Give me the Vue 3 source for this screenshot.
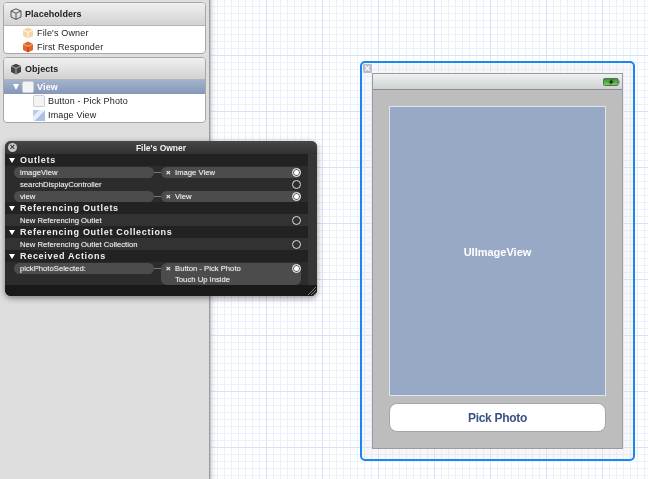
<script setup>
const sections = [
  { title: 'Outlets', rows: [
    { name: 'imageView', target: 'Image View', on: true, pill: true },
    { name: 'searchDisplayController' },
    { name: 'view', target: 'View', on: true, pill: true },
  ]},
  { title: 'Referencing Outlets', rows: [{ name: 'New Referencing Outlet', band: true }] },
  { title: 'Referencing Outlet Collections', rows: [{ name: 'New Referencing Outlet Collection', band: true }] },
  { title: 'Received Actions', rows: [
    { name: 'pickPhotoSelected:', target: 'Button - Pick Photo', sub: 'Touch Up Inside', on: true, pill: true },
  ]},
]
</script>

<template>
  <div class="app">
    <aside class="side">
      <section class="panel first">
        <header class="panel-head">
          <svg class="cube" viewBox="0 0 12 12"><path d="M6 .8 11 3v6l-5 2.4L1 9V3zM1 3l5 2.3L11 3M6 5.3v6" fill="none" stroke="#555" stroke-width="1"/></svg>
          <span>Placeholders</span>
        </header>
        <div class="row l1">
          <svg class="ico" viewBox="0 0 12 12"><path d="M6 .5 11 3v6l-5 2.5L1 9V3z" fill="#f8d3a6"/><path d="M1 3l5 2.5L11 3M6 5.5v6" fill="none" stroke="#fff" stroke-width=".9"/></svg>
          <span>File's Owner</span>
        </div>
        <div class="row l1">
          <svg class="ico" viewBox="0 0 12 12"><path d="M6 .5 11 3v6l-5 2.5L1 9V3z" fill="#e0672a"/><path d="M1 3l5 2.5L11 3" fill="none" stroke="#f9b98a" stroke-width=".9"/><path d="M6 6v5" stroke="#a83d10"/></svg>
          <span>First Responder</span>
        </div>
      </section>
      <section class="panel">
        <header class="panel-head">
          <svg class="cube" viewBox="0 0 12 12"><path d="M6 .8 11 3v6l-5 2.4L1 9V3z" fill="#444"/><path d="M1 3l5 2.3L11 3M6 5.3v6" fill="none" stroke="#ccc" stroke-width=".8"/></svg>
          <span>Objects</span>
        </header>
        <div class="row selected">
          <i class="tri"></i>
          <i class="view-ico"></i>
          <span>View</span>
        </div>
        <div class="row l2">
          <i class="view-ico"></i>
          <span>Button - Pick Photo</span>
        </div>
        <div class="row l2">
          <i class="img-ico"></i>
          <span>Image View</span>
        </div>
      </section>
    </aside>

    <main class="canvas">
      <div class="selection">
        <span class="sel-close">×</span>
        <div class="device">
          <div class="status">
            <svg class="battery" viewBox="0 0 17 8">
              <defs><linearGradient id="bat" x1="0" y1="0" x2="0" y2="1"><stop offset="0" stop-color="#2f8f22"/><stop offset="1" stop-color="#74d84e"/></linearGradient></defs>
              <rect x=".5" y=".5" width="14.5" height="7" rx="1" fill="url(#bat)" stroke="#667"/>
              <rect x="15" y="2.5" width="1.5" height="3" fill="#778"/>
              <path d="M9.5 1 5.5 4.4h2.6L6.5 7l4.5-3.4H8.4z" fill="#111"/>
            </svg>
          </div>
          <div class="content">
            <div class="image-view">UIImageView</div>
            <div class="pick">Pick Photo</div>
          </div>
        </div>
      </div>
    </main>

    <div class="inspector">
      <header class="ins-title">
        <span class="ins-close">×</span>
        <span>File's Owner</span>
      </header>
      <div class="ins-body">
        <div class="ins-list">
          <template v-for="s in sections" :key="s.title">
            <div class="sec"><i class="tri white"></i>{{ s.title }}</div>
            <div v-for="r in s.rows" :key="r.name" class="conn" :class="{ band: r.band, tall: r.sub }">
              <span class="cname" :class="{ pill: r.pill }">{{ r.name }}</span>
              <template v-if="r.target">
                <i class="link"></i>
                <div class="ctarget" :class="{ multi: r.sub }">
                  <div class="ct-line"><b>×</b>{{ r.target }}</div>
                  <div v-if="r.sub" class="ct-sub">{{ r.sub }}</div>
                </div>
              </template>
              <i class="dot" :class="{ on: r.on }"></i>
            </div>
          </template>
        </div>
        <div class="ins-strip"></div>
      </div>
      <footer class="ins-foot">
        <svg viewBox="0 0 8 8" width="8" height="8"><path d="M0 8 8 0M3 8l5-5M6 8l2-2" stroke="#888" stroke-width=".9"/></svg>
      </footer>
    </div>
  </div>
</template>

<style>
html, body { margin: 0; padding: 0; overflow: hidden; }
</style>

<style scoped>
.app {
  position: relative;
  width: 648px;
  height: 479px;
  display: flex;
  overflow: hidden;
  font-family: "Liberation Sans", Arial, sans-serif;
  filter: blur(.3px);
}
.side {
  width: 210px;
  flex: none;
  box-sizing: border-box;
  padding: 2px 3px 0 3px;
  background: #dedede;
  border-right: 1px solid #9c9c9c;
  display: flex;
  flex-direction: column;
  gap: 3px;
  color: #222;
  font-size: 9px;
}
.panel {
  background: #fff;
  border: 1px solid #a8a8a8;
  border-radius: 4px;
  overflow: hidden;
}
.panel.first { height: 52px; box-sizing: border-box; }
.panel-head {
  height: 22px;
  box-sizing: border-box;
  background: linear-gradient(#f0f0f0, #d2d2d2);
  border-bottom: 1px solid #b4b4b4;
  display: flex;
  align-items: center;
  gap: 3px;
  padding-left: 6px;
  font-weight: bold;
  font-size: 9px;
  letter-spacing: .05px;
  color: #1c1c1c;
}
.first .panel-head { height: 23px; }
.cube { width: 12px; height: 12px; }
.row {
  height: 14px;
  display: flex;
  align-items: center;
  letter-spacing: .15px;
}
.l1 { padding-left: 18px; gap: 3px; }
.l2 { padding-left: 29px; gap: 3px; }
.ico { width: 12px; height: 12px; }
.selected {
  background: linear-gradient(#a3b2cd, #8597b8);
  color: #fff;
  font-weight: bold;
  padding-left: 9px;
  height: 14px;
  gap: 3px;
}
.tri {
  width: 0; height: 0;
  border-left: 3.5px solid transparent;
  border-right: 3.5px solid transparent;
  border-top: 6px solid #fff;
}
.view-ico {
  width: 10px; height: 10px;
  background: #f4f4f4;
  border: 1px solid #cfcfcf;
  border-radius: 2px;
}
.img-ico {
  width: 12px; height: 11px;
  background: linear-gradient(135deg, #b6cdee 30%, #e4edf9 30% 55%, #a9c3e8 55%);
}
.canvas {
  flex: 1;
  position: relative;
  background-color: #fff;
  background-image:
    linear-gradient(#d4e3f8 1px, transparent 1px),
    linear-gradient(90deg, #d4e3f8 1px, transparent 1px),
    linear-gradient(#e9f1fc 1px, transparent 1px),
    linear-gradient(90deg, #e9f1fc 1px, transparent 1px);
  background-size: 56px 56px, 56px 56px, 7px 7px, 7px 7px;
  background-position: 0 55px, 0 0, 0 6px, 0 0;
  box-shadow: inset 5px 0 5px -3px rgba(0,0,0,.18);
}
.selection {
  position: absolute;
  left: 150px;
  top: 61px;
  width: 275px;
  height: 400px;
  box-sizing: border-box;
  border: 2px solid #1b86f2;
  border-radius: 5px;
  background: rgba(225,228,232,.28);
  padding: 10px 10px 0;
}
.sel-close {
  position: absolute;
  left: 1px; top: 1px;
  width: 9px; height: 9px;
  background: #b8c0cb;
  border-radius: 1px;
  color: #fff;
  font: bold 10px/9px "Liberation Sans", sans-serif;
  text-align: center;
}
.device {
  height: 376px;
  display: flex;
  flex-direction: column;
  box-sizing: border-box;
  background: #bdbdbd;
  border: 1px solid #9b9b9b;
}
.status {
  height: 15px;
  flex: none;
  background: linear-gradient(#eef1f1, #cdd2d3);
  border-bottom: 1px solid #8d8d8d;
  display: flex;
  justify-content: flex-end;
  align-items: center;
  padding-right: 2px;
}
.battery { width: 17px; height: 8px; }
.content {
  flex: 1;
  display: flex;
  flex-direction: column;
  padding: 16px 16px 0;
  gap: 7px;
}
.image-view {
  height: 290px;
  flex: none;
  box-sizing: border-box;
  background: #98a9c6;
  border: 1px solid #dfe5ee;
  color: #fff;
  font-weight: bold;
  font-size: 11px;
  padding-top: 2px;
  display: flex;
  align-items: center;
  justify-content: center;
}
.pick {
  height: 29px;
  flex: none;
  box-sizing: border-box;
  background: #fff;
  border: 1px solid #a6a6a6;
  border-radius: 8px;
  color: #3a5284;
  font-weight: bold;
  font-size: 12px;
  letter-spacing: -.3px;
  display: flex;
  align-items: center;
  justify-content: center;
}
.inspector {
  position: absolute;
  left: 5px;
  top: 141px;
  width: 312px;
  height: 155px;
  display: flex;
  flex-direction: column;
  background: #222;
  border-radius: 6px;
  overflow: hidden;
  color: #eee;
  box-shadow: 0 2px 6px rgba(0,0,0,.45);
  font-size: 7.7px;
}
.ins-title {
  height: 13px;
  flex: none;
  position: relative;
  background: linear-gradient(#474747, #323232);
  text-align: center;
  font-weight: bold;
  font-size: 8.5px;
  line-height: 15px;
  color: #f2f2f2;
}
.ins-close {
  position: absolute;
  left: 3px; top: 2px;
  width: 9px; height: 9px;
  border-radius: 50%;
  background: #c8c8c8;
  color: #333;
  font-size: 9px;
  line-height: 9px;
}
.ins-body { flex: 1; display: flex; min-height: 0; }
.ins-list { flex: 1; min-width: 0; }
.ins-strip { width: 9px; flex: none; background: #363636; }
.sec {
  height: 12px;
  display: flex;
  align-items: center;
  gap: 5px;
  padding-left: 4px;
  font-weight: bold;
  font-size: 9px;
  letter-spacing: .7px;
  color: #f0f0f0;
}
.tri.white { border-left-width: 3px; border-right-width: 3px; border-top-width: 5px; }
.conn {
  height: 12px;
  display: flex;
  align-items: center;
  position: relative;
  background: #2c2c2c;
  color: #eee;
  text-shadow: 0 0 1px rgba(255,255,255,.45);
}
.conn.band { background: #323232; }
.conn.tall { height: 23px; align-items: flex-start; padding-top: 1px; box-sizing: border-box; }
.cname {
  width: 140px;
  height: 11px;
  line-height: 11px;
  margin-left: 9px;
  padding-left: 6px;
  box-sizing: border-box;
  flex: none;
}
.cname.pill { background: #4c4c4c; border-radius: 6px; }
.link { width: 7px; height: 1px; background: #777; flex: none; }
.tall .link { margin-top: 5px; }
.ctarget {
  width: 140px;
  height: 11px;
  flex: none;
  background: #4c4c4c;
  border-radius: 6px;
  box-sizing: border-box;
  padding-left: 5px;
  line-height: 11px;
}
.ctarget.multi { height: 22px; }
.ct-line b { display: inline-block; width: 9px; font-size: 8px; }
.ct-sub { padding-left: 9px; }
.dot {
  position: absolute;
  right: 7.5px;
  top: 1.5px;
  width: 9px;
  height: 9px;
  box-sizing: border-box;
  border-radius: 50%;
  border: 1px solid #ddd;
}
.dot.on { background: #fff; box-shadow: inset 0 0 0 1px #555; }
.ins-foot {
  height: 10px;
  flex: none;
  background: #191919;
  display: flex;
  justify-content: flex-end;
  align-items: flex-end;
  padding: 0 1px 1px 0;
}
</style>
